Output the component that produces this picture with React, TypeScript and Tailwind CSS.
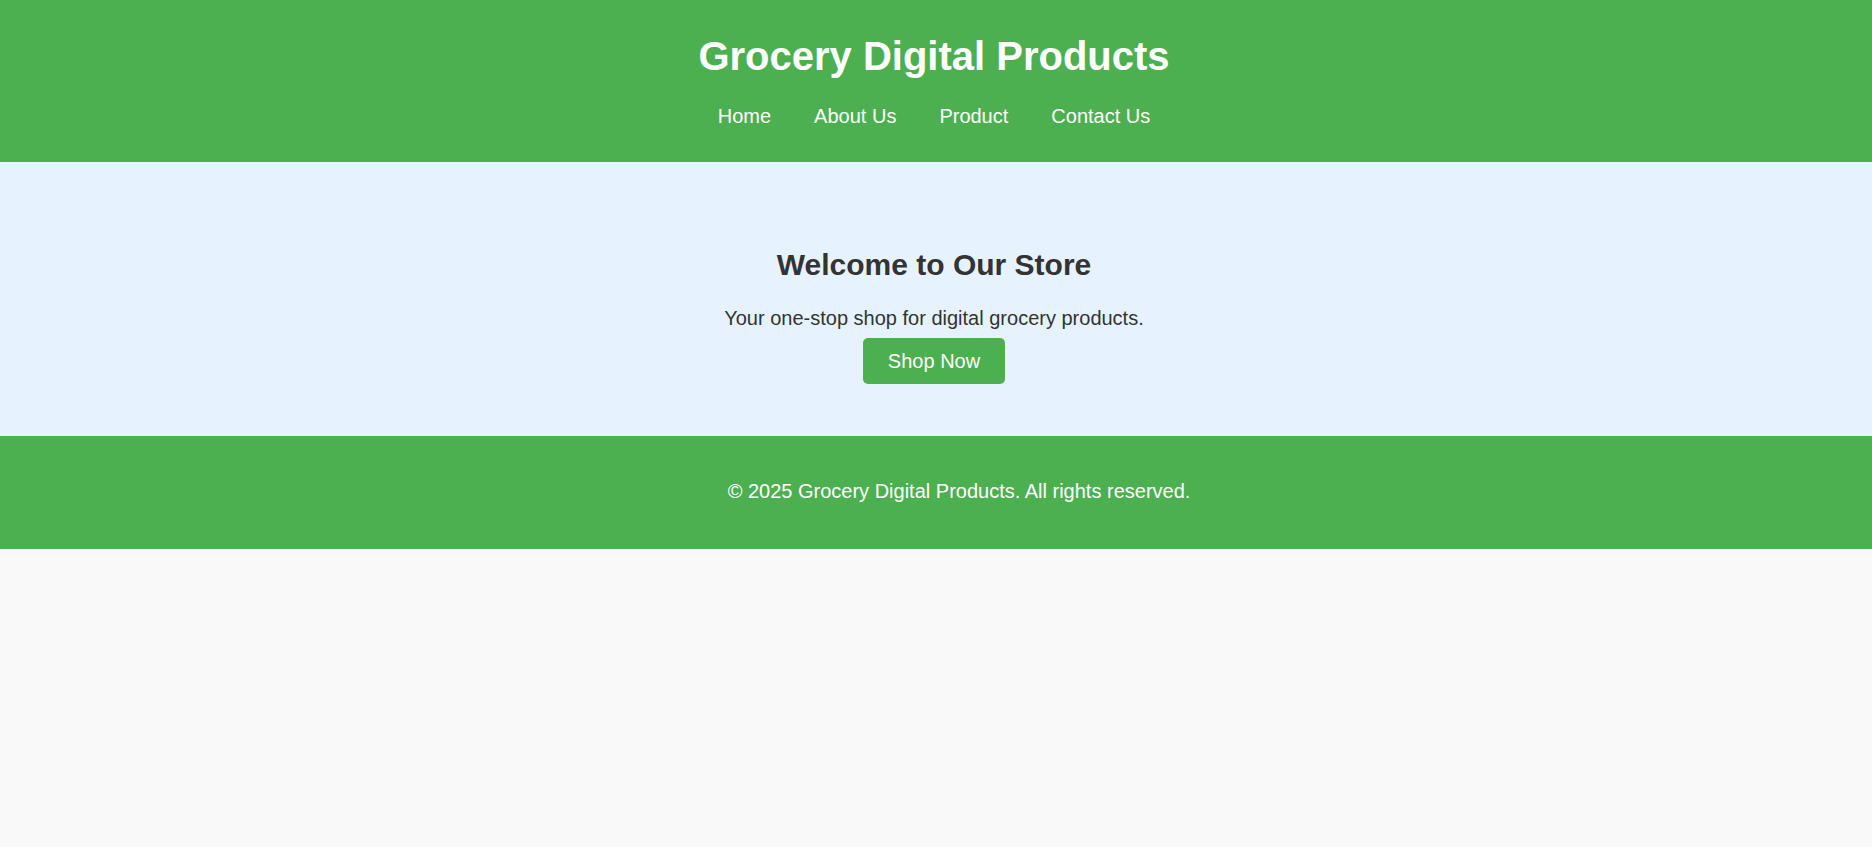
import React from "react";

const navLinks = ["Home", "About Us", "Product", "Contact Us"];

export default function App() {
  return (
    <div className="min-h-[847px] bg-[#f9f9f9] font-['Liberation_Sans',Arial,sans-serif] text-[#333]">
      <header className="bg-[#4caf50] pt-[33px] pb-[34px] pr-[4px] text-center text-white">
        <h1 className="text-[40px] font-bold leading-[46px]">
          Grocery Digital Products
        </h1>
        <nav className="mt-[26px] flex justify-center gap-[43px] text-[20px] leading-[23px]">
          {navLinks.map((link) => (
            <a key={link} href="#" className="text-white hover:underline">
              {link}
            </a>
          ))}
        </nav>
      </header>

      <section className="bg-[#e6f3fe] pt-[86px] pb-[52px] pr-[4px] text-center">
        <h2 className="text-[30px] font-bold leading-[34px]">
          Welcome to Our Store
        </h2>
        <p className="mt-[25px] text-[20px] leading-[23px]">
          Your one-stop shop for digital grocery products.
        </p>
        <button
          type="button"
          className="mt-[8px] h-[46px] rounded-[5px] bg-[#4caf50] px-[25px] text-[20px] leading-[23px] text-white hover:bg-[#43a047]"
        >
          Shop Now
        </button>
      </section>

      <footer className="bg-[#4caf50] pt-[44px] pb-[46px] pl-[46px] text-center text-[20px] leading-[23px] text-white">
        <p>© 2025 Grocery Digital Products. All rights reserved.</p>
      </footer>
    </div>
  );
}
